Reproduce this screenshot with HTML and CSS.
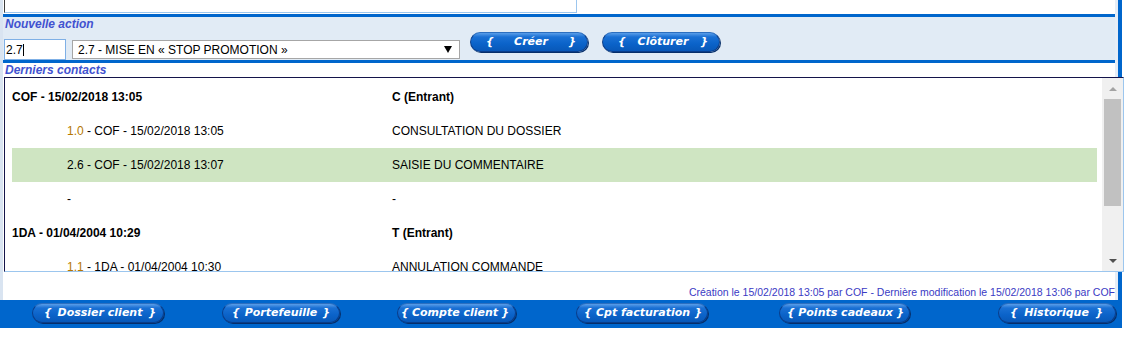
FILE: index.html
```html
<!DOCTYPE html>
<html lang="fr">
<head>
<meta charset="utf-8">
<title>Contacts</title>
<link rel="stylesheet" href="styles.css">
</head>
<body>
<div class="wrap">
  <div class="inner">
    <div class="top"><div class="textarea"></div></div>
    <div class="rule"></div>
    <section class="new-action">
      <div class="label">Nouvelle action</div>
      <div class="action-row">
        <div class="code-input">2.7<span class="caret"></span></div>
        <div class="select"><span>2.7 - MISE EN « STOP PROMOTION »</span><span class="arrow"></span></div>
        <button class="btn btn-creer"><span>{</span><span>Créer</span><span>}</span></button>
        <button class="btn btn-cloturer"><span>{</span><span>Clôturer</span><span>}</span></button>
      </div>
    </section>
    <div class="rule"></div>
    <div class="label label-contacts">Derniers contacts</div>
    <div class="listbox">
      <div class="rows">
        <div class="row head"><span>COF - 15/02/2018 13:05</span><span>C (Entrant)</span></div>
        <div class="row sub"><span class="c1"><span class="num">1.0</span> - COF - 15/02/2018 13:05</span><span>CONSULTATION DU DOSSIER</span></div>
        <div class="row sub sel"><span class="c1">2.6 - COF - 15/02/2018 13:07</span><span>SAISIE DU COMMENTAIRE</span></div>
        <div class="row sub"><span class="c1">-</span><span>-</span></div>
        <div class="row head"><span>1DA - 01/04/2004 10:29</span><span>T (Entrant)</span></div>
        <div class="row sub"><span class="c1"><span class="num">1.1</span> - 1DA - 01/04/2004 10:30</span><span>ANNULATION COMMANDE</span></div>
      </div>
      <div class="scrollbar">
        <div class="sb-btn"><span class="tri-up"></span></div>
        <div class="thumb"></div>
        <div class="track"></div>
        <div class="sb-btn"><span class="tri-down"></span></div>
      </div>
    </div>
    <div class="meta">Création le 15/02/2018 13:05 par COF - Dernière modification le 15/02/2018 13:06 par COF</div>
  </div>
</div>
<nav class="bottom-bar">
  <button class="btn b-dossier"><span>{</span><span>Dossier client</span><span>}</span></button>
  <button class="btn b-portefeuille"><span>{</span><span>Portefeuille</span><span>}</span></button>
  <button class="btn b-compte"><span>{</span><span>Compte client</span><span>}</span></button>
  <button class="btn b-cpt"><span>{</span><span>Cpt facturation</span><span>}</span></button>
  <button class="btn b-points"><span>{</span><span>Points cadeaux</span><span>}</span></button>
  <button class="btn b-historique"><span>{</span><span>Historique</span><span>}</span></button>
</nav>
</body>
</html>
```
FILE: styles.css
```css
* { box-sizing: border-box; }
body {
  margin: 0;
  background: #fff;
  font-family: "Liberation Sans", Arial, sans-serif;
  font-size: 12px;
  color: #000;
}
.wrap {
  width: 1122px;
  border-left: 3px solid #d9e4f1;
  border-right: 4px solid #0066cc;
}
.inner {
  border-right: 3px solid #e6edf6;
}
.top { height: 14px; }
.textarea {
  margin-left: 1px;
  width: 573px;
  height: 13px;
  border-left: 1px solid #3c3c3c;
  border-right: 1px solid #9cc6ee;
  border-bottom: 1px solid #9cc6ee;
}
.rule { height: 3px; background: #0066cc; }
.new-action { background: #e1ebf5; height: 43px; }
.label {
  font-weight: bold;
  font-style: italic;
  color: #4152d0;
  line-height: 15px;
  padding-left: 2px;
}
.label-contacts { line-height: 14px; }
.action-row {
  display: flex;
  align-items: flex-start;
  height: 28px;
}
.code-input {
  margin: 7px 0 0 1px;
  width: 62px;
  height: 21px;
  border: 1px solid #7fb0e6;
  background: #fff;
  padding-left: 1px;
  display: flex;
  align-items: center;
}
.caret {
  display: inline-block;
  width: 1px;
  height: 12px;
  background: #000;
}
.select {
  margin: 8px 0 0 6px;
  width: 388px;
  height: 19px;
  border: 1px solid #a6a6a6;
  background: #fff;
  display: flex;
  align-items: center;
  justify-content: space-between;
  padding: 0 7px 0 5px;
}
.arrow {
  width: 0;
  height: 0;
  border-left: 4px solid transparent;
  border-right: 4px solid transparent;
  border-top: 7px solid #000;
}
.btn {
  height: 20px;
  padding: 0;
  border: 1px solid #0a3d8a;
  border-top-color: #2c6fc0;
  border-radius: 10px;
  background: linear-gradient(to bottom, #5a9ee9 0%, #1a70d4 22%, #0b63c9 60%, #0858b8 100%);
  box-shadow: 1px 1px 0 #062f6a;
  color: #fff;
  font-family: "DejaVu Sans", Verdana, sans-serif;
  font-weight: bold;
  font-style: italic;
  font-size: 11px;
  line-height: 18px;
  display: flex;
  align-items: center;
  justify-content: space-between;
  white-space: nowrap;
}
.btn-creer { margin-left: 10px; width: 118px; padding: 0 11px 0 15px; }
.btn-cloturer { margin-left: 14px; width: 118px; padding: 0 11px 0 15px; }

.listbox {
  margin: 0 -9px 0 1px;
  height: 195px;
  border: 1px solid;
  border-color: #14144a #9cc6ee #9cc6ee #14144a;
  display: flex;
  overflow: hidden;
  background: #fff;
}
.rows {
  flex: 1;
  padding: 2px 5px 0 7px;
}
.row {
  display: grid;
  grid-template-columns: 380px 1fr;
  height: 34px;
  align-items: center;
  line-height: 14px;
  white-space: nowrap;
}
.row.head { font-weight: bold; }
.row.sub .c1 { padding-left: 55px; }
.row.sel { background: #cfe5c2; }
.num { color: #b57800; }
.scrollbar {
  width: 21px;
  background: #f0f0f0;
  display: flex;
  flex-direction: column;
  align-items: center;
}
.sb-btn {
  height: 21px;
  width: 21px;
  display: flex;
  align-items: center;
  justify-content: center;
}
.tri-up {
  width: 0; height: 0;
  border-left: 4px solid transparent;
  border-right: 4px solid transparent;
  border-bottom: 4px solid #a3a3a3;
}
.tri-down {
  width: 0; height: 0;
  border-left: 4px solid transparent;
  border-right: 4px solid transparent;
  border-top: 4px solid #505050;
}
.thumb { width: 17px; height: 107px; background: #c1c1c1; }
.track { flex: 1; }
.meta {
  height: 28px;
  display: flex;
  justify-content: flex-end;
  align-items: flex-end;
  font-size: 10.5px;
  line-height: 13px;
  color: #3a3ac4;
  padding-bottom: 1px;
  white-space: nowrap;
}
.bottom-bar {
  width: 1122px;
  height: 28px;
  background: #0066cc;
  display: flex;
  align-items: flex-start;
  padding-top: 3px;
}
.b-dossier { margin-left: 32px; width: 132px; padding: 0 7px 0 11px; }
.b-portefeuille { margin-left: 58px; width: 118px; padding: 0 9px 0 9px; }
.b-compte { margin-left: 57px; width: 119px; padding: 0 6px 0 3px; }
.b-cpt { margin-left: 60px; width: 132px; padding: 0 5px 0 7px; }
.b-points { margin-left: 71px; width: 131px; padding: 0 5px 0 7px; }
.b-historique { margin-left: 88px; width: 118px; padding: 0 12px 0 11px; }
```
